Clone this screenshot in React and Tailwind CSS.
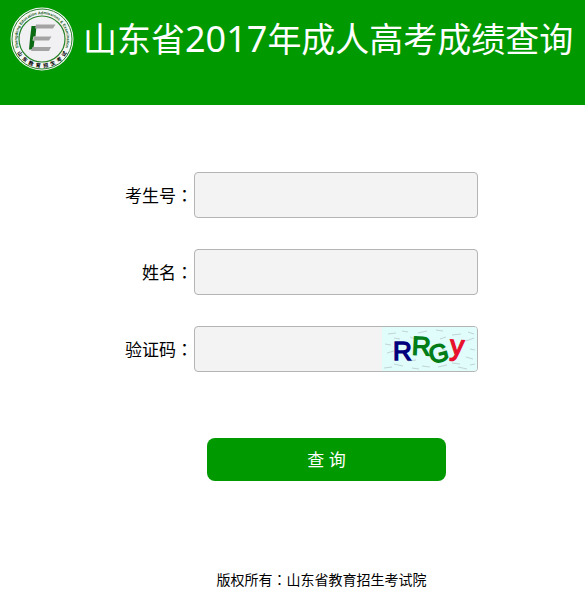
import { useState } from 'react';

const NOISE = [
  [6, 7, 8, -1], [20, 4, 6, 1], [36, 6, 9, -2], [54, 3, 7, 1], [70, 8, 9, -1], [86, 5, 6, 2],
  [3, 17, 6, 1], [28, 10, 5, 2], [84, 14, 8, -3], [88, 22, 5, 1], [5, 26, 7, -2], [58, 12, 6, -2],
  [12, 37, 9, 2], [26, 34, 8, -1], [40, 39, 8, 1], [56, 40, 9, -2], [70, 36, 8, 1], [84, 30, 7, 2],
  [2, 41, 8, -1], [30, 41, 7, 1], [76, 40, 9, 2], [88, 38, 5, -1], [12, 11, 6, 1], [60, 22, 5, 2],
];

const SEAL = ['山', '东', '教', '育', '招', '生', '考', '试'];

function Logo() {
  return (
    <svg viewBox="0 0 64 64" className="size-16 shrink-0" role="img" aria-label="山东省教育招生考试院">
      <defs>
        <path id="arc-top" d="M 10.1 43.600 A 24.800 24.800 0 1 1 53.900 43.600" />
      </defs>
      <circle cx="32" cy="32" r="31.5" fill="#f6f6f6" />
      <circle cx="32" cy="32" r="30" fill="none" stroke="#27822b" strokeWidth="1" />
      <circle cx="32" cy="32" r="23" fill="#f1f1f3" stroke="#27822b" strokeWidth="1.2" />
      <text fill="#14591a" fontSize="4" fontWeight="700" fontFamily="Liberation Sans, sans-serif">
        <textPath href="#arc-top" startOffset="50%" textAnchor="middle">Shangdong Education Admissions &amp; Examination</textPath>
      </text>
      <g fill="#111" fontSize="5" fontWeight="900" textAnchor="middle" fontFamily="Noto Sans CJK SC, sans-serif">
        {SEAL.map((char, i) => (
          <text key={char} x="32" y="60.5" transform={`rotate(${56 - i * 16} 32 32)`}>{char}</text>
        ))}
      </g>
      <path d="M21.500 19 h5 l-1 10.500 h-2 l-1 4 h2 l-1 7 l-2 2 h-2.500 l1 -11z" fill="#0b6b14" />
      <path d="M26 17.500 h19.500 l-2.500 4 h-18z" fill="#a3a3a3" />
      <path d="M24 29.500 h17.500 l-2.500 4 h-16z" fill="#a3a3a3" />
      <path d="M22.500 40 h18.500 l-2 4 h-18z" fill="#a3a3a3" />
    </svg>
  );
}

function Captcha() {
  return (
    <svg viewBox="0 0 95 44" className="h-11 w-[95px] rounded-r-[3px]" role="img" aria-label="验证码">
      <rect width="95" height="44" fill="#e0fcfb" />
      {NOISE.map(([x, y, w, dy]) => (
        <path key={`${x}-${y}`} d={`M${x} ${y}l${w} ${dy}`} stroke="#bccfd0" strokeWidth="0.9" />
      ))}
      <g fontFamily="Liberation Sans, Arial, sans-serif" fontSize="26" strokeWidth="1.4">
        <text x="11" y="33" fill="#00007c" stroke="#00007c">R</text>
        <text x="30" y="28" fill="#007d16" stroke="#007d16" transform="rotate(3 39 18)">R</text>
        <text x="47" y="35" fill="#007d16" stroke="#007d16" fontSize="25" transform="rotate(-14 56 27)">G</text>
        <text x="68" y="28" fill="#e8112d" stroke="#e8112d" fontSize="28" transform="rotate(4 75 21)">y</text>
      </g>
    </svg>
  );
}

function Field({ id, label, value, onChange, children }) {
  return (
    <div className="flex items-center">
      <label htmlFor={id} className="w-[68px] text-right text-[17px] whitespace-nowrap">
        {label}<span className="font-['Noto_Sans_CJK_TC',sans-serif]">：</span>
      </label>
      <div className="relative ml-px">
        <input
          id={id}
          type="text"
          value={value}
          onChange={onChange}
          className="block h-[46px] w-[284px] rounded border border-[#b4b4b4] bg-[#f3f3f3] px-3 text-[17px] focus:outline-none focus:border-[#009900]"
        />
        {children}
      </div>
    </div>
  );
}

export default function App() {
  const [form, setForm] = useState({ number: '', name: '', code: '' });

  const update = (key) => (e) => setForm(prev => ({ ...prev, [key]: e.target.value }));

  return (
    <div className="bg-white text-black font-['Noto_Sans','Noto_Sans_CJK_SC',sans-serif]">
      <header className="flex items-start gap-[9px] bg-[#009900] px-[10px] pt-[7px] pb-[34px]">
        <Logo />
        <h1 className="text-[34px] leading-[64px] whitespace-nowrap text-white">
          山东省<span className="text-4xl leading-none">2017</span>年成人高考成绩查询
        </h1>
      </header>

      <form onSubmit={e => e.preventDefault()} className="flex flex-col items-center pt-[67px]">
        <div className="flex flex-col gap-[31px] pl-[18px]">
          <Field id="number" label="考生号" value={form.number} onChange={update('number')} />
          <Field id="name" label="姓名" value={form.name} onChange={update('name')} />
          <Field id="code" label="验证码" value={form.code} onChange={update('code')}>
            <span className="absolute top-px right-px">
              <Captcha />
            </span>
          </Field>
        </div>
        <div className="pt-[66px] pl-[68px]">
          <button type="submit" className="h-[43px] w-[239px] rounded-lg bg-[#009900] text-[17px] text-white hover:bg-[#008800]">
            查 询
          </button>
        </div>
      </form>

      <footer className="pt-[88px] pl-[58px] text-center text-sm leading-5">
        版权所有<span className="font-['Noto_Sans_CJK_TC',sans-serif]">：</span>山东省教育招生考试院
      </footer>
    </div>
  );
}
